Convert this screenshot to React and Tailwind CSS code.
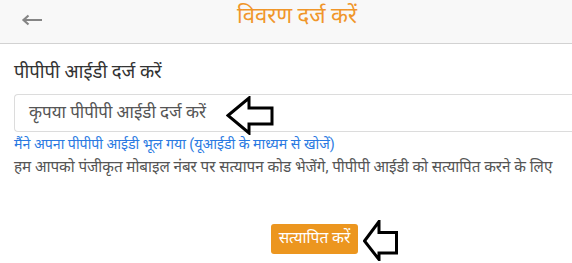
import React from "react";

function OutlineArrow({ className, viewBox, d }) {
  return (
    <svg className={className} viewBox={viewBox} fill="none" preserveAspectRatio="none">
      <path d={d} fill="white" stroke="black" strokeWidth="3" strokeLinejoin="miter" />
    </svg>
  );
}

export default function App() {
  return (
    <div className="w-[572px] h-[263px] bg-white overflow-hidden" style={{ fontFamily: 'Roboto, "Noto Sans", sans-serif' }}>
      <header className="h-[44px] bg-[#f8f8f8] border-b border-[#d2d2d2] flex items-center pl-[21px] pr-[21px]">
        <svg className="w-[22px] h-[12px] -mt-[4px]" viewBox="0 0 22 12" fill="none">
          <path d="M21 6 H3 M7.5 1.5 L2.5 6 L7.5 10.5" stroke="#858585" strokeWidth="2.2" />
        </svg>
        <div className="flex-1 text-center text-[#f0962a] text-[22px] leading-none -mt-[11px]">विवरण दर्ज करें</div>
      </header>
      <main className="pl-[14px] flex flex-col">
        <label className="mt-[16px] text-[18.5px] leading-[25px] text-[#333]">पीपीपी आईडी दर्ज करें</label>
        <div className="mt-[9px] h-[38px] border border-[#dcdcdc] border-r-0 rounded-l-[4px] flex items-center pl-[14px] text-[17px] text-[#555]">
          <span>कृपया पीपीपी आईडी दर्ज करें</span>
          <OutlineArrow className="ml-[20px] w-[48px] h-[39px] -my-[2px] translate-y-[2px]" viewBox="0 0 48 39" d="M2 19.5 L23 2 L23 12 L46 12 L46 28 L23 28 L23 37 Z" />
        </div>
        <a className="mt-[3px] text-[14.2px] leading-[18px] text-[#2a7ae2]">मैंने अपना पीपीपी आईडी भूल गया (यूआईडी के माध्यम से खोजें)</a>
        <p className="mt-[4px] text-[15.2px] leading-[21px] text-[#555]">हम आपको पंजीकृत मोबाइल नंबर पर सत्यापन कोड भेजेंगे, पीपीपी आईडी को सत्यापित करने के लिए</p>
        <div className="mt-[46px] flex items-center gap-[5px] pl-[257px]">
          <button className="h-[30px] w-[87px] rounded-[3px] bg-[#ec961f] text-white text-[15.5px] leading-none">सत्यापित करें</button>
          <OutlineArrow className="w-[35px] h-[41px] -my-[6px] translate-y-[1px]" viewBox="0 0 35 41" d="M1.5 21 L16 1.5 L16 12.5 L33.5 12.5 L33.5 33 L16 33 L16 39.5 Z" />
        </div>
      </main>
    </div>
  );
}
